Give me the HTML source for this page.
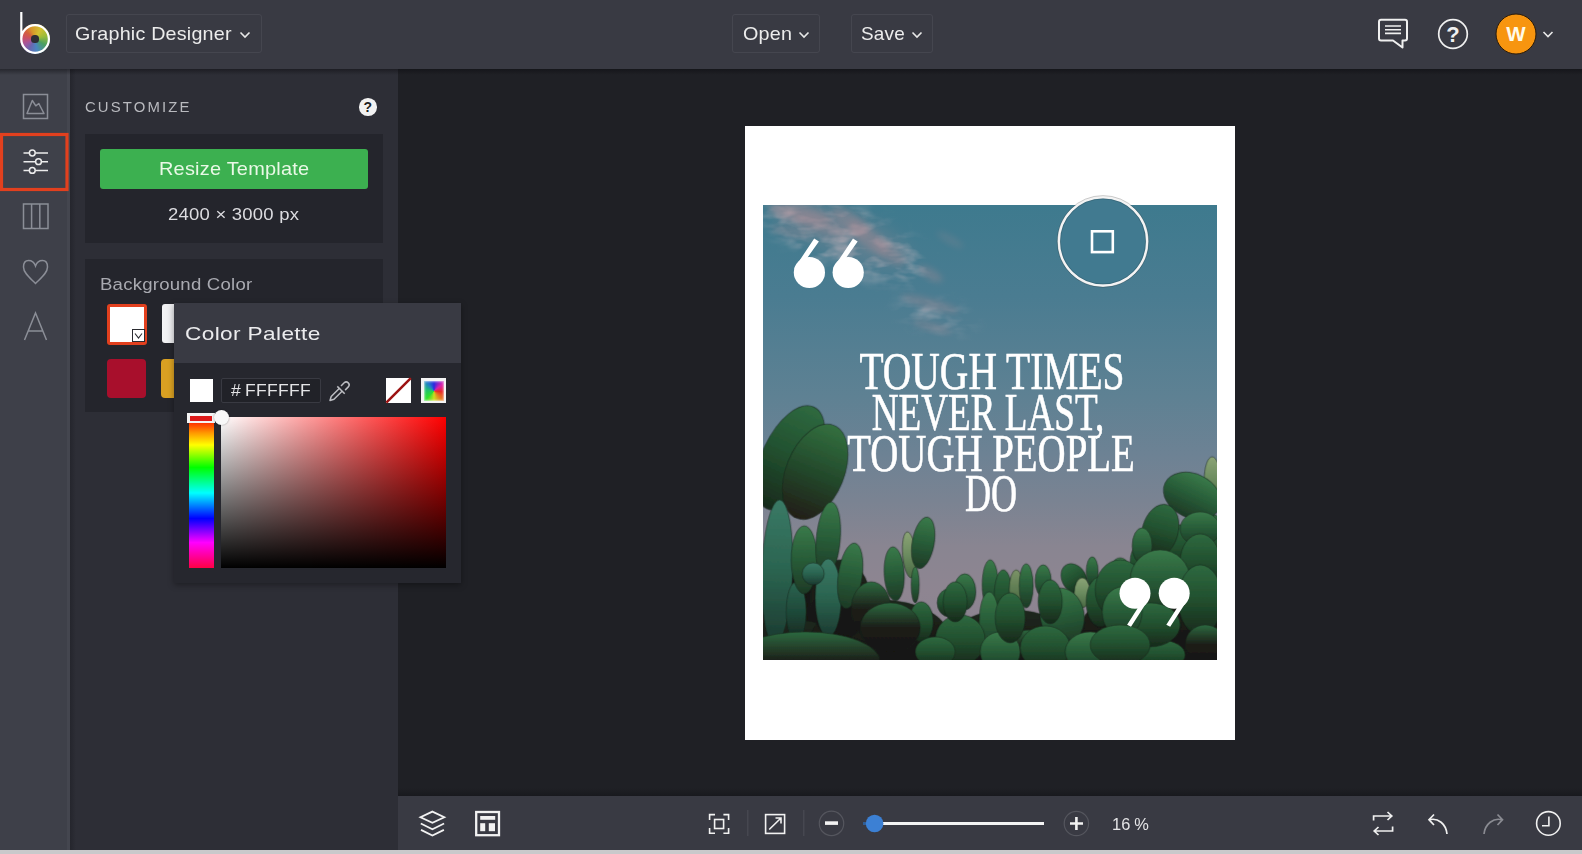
<!DOCTYPE html>
<html><head><meta charset="utf-8">
<style>
*{margin:0;padding:0;box-sizing:border-box}
html,body{width:1582px;height:854px;overflow:hidden;background:#c9c9cb;font-family:"Liberation Sans",sans-serif}
.abs{position:absolute}
#top{left:0;top:0;width:1582px;height:69px;background:#393a43}
#side{left:0;top:69px;width:70px;height:781px;background:#3e4049}
#panel{left:70px;top:69px;width:328px;height:781px;background:#2d2e36}
#canvas{left:398px;top:69px;width:1184px;height:727px;background:#1f2025}
#bottom{left:398px;top:796px;width:1184px;height:54px;background:#393a43}
.ddbox{border:1px solid #45464f;border-radius:3px}
.txt{color:#ececec;white-space:nowrap;line-height:1}
svg{position:absolute;overflow:visible}
</style></head>
<body>
<div id="top" class="abs"></div>
<div id="side" class="abs"></div>
<div id="panel" class="abs"></div>
<div id="canvas" class="abs"></div>
<div class="abs" style="left:398px;top:788px;width:1184px;height:8px;background:linear-gradient(rgba(8,8,12,0),rgba(8,8,12,.3))"></div>
<div id="bottom" class="abs"></div>

<!-- ============ TOP BAR ============ -->
<!-- logo -->
<div class="abs" style="left:20px;top:24px;width:30px;height:30px;border-radius:50%;background:conic-gradient(from -20deg,#d8962a,#d2c030 50deg,#98bc3a 95deg,#4aa060 140deg,#4a86c0 190deg,#6a66b0 230deg,#a8559a 265deg,#cc5060 300deg,#d4603c 330deg,#d8962a 360deg)"></div>
<div class="abs" style="left:31.4px;top:35.4px;width:7.2px;height:7.2px;border-radius:50%;background:#2e2f36"></div>
<svg style="left:0;top:0" width="70" height="69"><path d="M21.3 12 V39 A13.8 13.8 0 1 0 35 25.2 A13.8 13.8 0 0 0 21.3 39" fill="none" stroke="#fff" stroke-width="2.2"/></svg>

<div class="abs ddbox" style="left:66px;top:14px;width:196px;height:39px"></div>
<div class="abs txt" id="t-gd" style="left:75.43px;top:24.5px;font-size:18.5px;letter-spacing:0.2px;color:#ececec;transform-origin:0 0;transform:scaleX(1.0651)">Graphic Designer</div>
<svg style="left:0;top:0" width="300" height="69"><path d="M240.5 32.5 L245 37 L249.5 32.5" fill="none" stroke="#e8e8e8" stroke-width="1.6"/></svg>

<div class="abs ddbox" style="left:732px;top:14px;width:88px;height:39px"></div>
<div class="abs txt" id="t-open" style="left:742.63px;top:24.9px;font-size:18.5px;letter-spacing:0.2px;color:#ececec;transform-origin:0 0;transform:scaleX(1.0682)">Open</div>
<div class="abs ddbox" style="left:851px;top:14px;width:82px;height:39px"></div>
<div class="abs txt" id="t-save" style="left:860.68px;top:24.9px;font-size:18.5px;letter-spacing:0.2px;color:#ececec;transform-origin:0 0;transform:scaleX(1.022)">Save</div>
<svg style="left:0;top:0" width="1582" height="69">
  <path d="M799.5 32.5 L804 37 L808.5 32.5" fill="none" stroke="#e8e8e8" stroke-width="1.6"/>
  <path d="M912.5 32.5 L917 37 L921.5 32.5" fill="none" stroke="#e8e8e8" stroke-width="1.6"/>
  <!-- chat -->
  <path d="M1381 19.8 H1405 A2 2 0 0 1 1407 21.8 V38.5 A2 2 0 0 1 1405 40.5 H1402.5 V47.5 L1393 40.5 H1381 A2 2 0 0 1 1379 38.5 V21.8 A2 2 0 0 1 1381 19.8 Z" fill="none" stroke="#f0f0f0" stroke-width="2" stroke-linejoin="round"/>
  <path d="M1385 26 H1401 M1385 29.7 H1401 M1385 33.4 H1401" stroke="#f0f0f0" stroke-width="1.6"/>
  <!-- help -->
  <circle cx="1453" cy="34" r="14.3" fill="none" stroke="#f0f0f0" stroke-width="1.7"/>
  <!-- avatar -->
  <circle cx="1516" cy="34" r="20" fill="#f7950f" stroke="#2a1a08" stroke-width="1"/>
  <path d="M1543.5 32 L1548 36.5 L1552.5 32" fill="none" stroke="#e8e8e8" stroke-width="1.6"/>
</svg>
<div class="abs txt" style="left:1442px;top:24px;font-size:22px;font-weight:bold;color:#f0f0f0;width:22px;text-align:center">?</div>
<div class="abs txt" style="left:1503px;top:24px;font-size:20.5px;font-weight:bold;color:#fffbe8;width:26px;text-align:center">W</div>

<!-- ============ SIDEBAR ============ -->
<div class="abs" style="left:67px;top:69px;width:3px;height:781px;background:#44464f"></div>
<div class="abs" style="left:70px;top:69px;width:6px;height:781px;background:linear-gradient(90deg,#25262d,#2d2e36)"></div>
<svg style="left:0;top:0" width="70" height="850">
  <g fill="none" stroke="#8b8e97" stroke-width="1.5">
    <rect x="23.5" y="94.5" width="24" height="24"/>
    <path d="M27 113.5 L32.3 100.5 L35.8 105.8 L38.8 103.5 L44 113.5 Z" stroke-linejoin="round"/>
    <rect x="23.5" y="204" width="24.5" height="24.5"/>
    <path d="M31.6 204 V228.5 M39.8 204 V228.5"/>
    <path d="M35.5 266 C33 259 23.5 258 23.5 267 C23.5 273 30 278 35.5 283.5 C41 278 47.5 273 47.5 267 C47.5 258 38 259 35.5 266 Z"/>
    <path d="M24.5 340 L35.5 313 L46.5 340 M28.3 331 H42.7"/>
  </g>
  <rect x="1.5" y="134.5" width="65.5" height="55" fill="#3f414a" stroke="#e2401e" stroke-width="3.2"/>
  <g stroke="#ececec" stroke-width="1.5" fill="none">
    <path d="M23.5 153 H29.3 M35.3 153 H48 M23.5 161.7 H35.5 M41.5 161.7 H48 M23.5 170.4 H29.3 M35.3 170.4 H48"/>
    <circle cx="32.3" cy="153" r="2.9"/>
    <circle cx="38.5" cy="161.7" r="2.9"/>
    <circle cx="32.3" cy="170.4" r="2.9"/>
  </g>
</svg>

<div class="abs" style="left:0;top:69px;width:1582px;height:6px;background:linear-gradient(rgba(10,10,14,.45),rgba(10,10,14,0))"></div>
<!-- ============ PANEL ============ -->
<div class="abs txt" id="t-cust" style="left:84.54px;top:99.9px;font-size:14px;letter-spacing:2.0px;color:#b9babf;transform-origin:0 0;transform:scaleX(1.0629)">CUSTOMIZE</div>
<div class="abs" style="left:359px;top:98px;width:17.5px;height:17.5px;border-radius:50%;background:#f2f2f2"></div>
<div class="abs txt" style="left:359px;top:100px;width:17.5px;text-align:center;font-size:14px;font-weight:bold;color:#1e1f24">?</div>

<div class="abs" style="left:85px;top:134px;width:298px;height:109px;background:#24252c"></div>
<div class="abs" style="left:100px;top:149px;width:268px;height:40px;background:#3cb050;border-radius:3px"></div>
<div class="abs txt" id="t-resize" style="left:158.62px;top:159.6px;font-size:18.5px;letter-spacing:0.2px;color:#e9f8e6;transform-origin:0 0;transform:scaleX(1.0783)">Resize Template</div>
<div class="abs txt" id="t-dim" style="left:168.04px;top:207.2px;font-size:16px;letter-spacing:0.2px;color:#dcdce0;transform-origin:0 0;transform:scaleX(1.1554)">2400 × 3000 px</div>

<div class="abs" style="left:85px;top:259px;width:298px;height:153px;background:#24252c"></div>
<div class="abs txt" id="t-bg" style="left:99.59px;top:276.9px;font-size:16.7px;letter-spacing:0.2px;color:#a9aab1;transform-origin:0 0;transform:scaleX(1.114)">Background Color</div>
<div class="abs" style="left:107px;top:304px;width:40px;height:41px;border:3px solid #e2401e;border-radius:3px;background:#fff"></div>
<div class="abs" style="left:132px;top:329px;width:13px;height:13px;border:1px solid #2a2b30;background:#fff"></div>
<svg style="left:0;top:0" width="200" height="400"><path d="M135 333.5 L138.5 338 L142 333.5" fill="none" stroke="#2a2b30" stroke-width="1.1"/></svg>
<div class="abs" style="left:162px;top:304px;width:30px;height:39px;border-radius:3px;background:linear-gradient(90deg,#f4f4f6,#d8d8dc)"></div>
<div class="abs" style="left:107px;top:359px;width:39px;height:39px;border-radius:4px;background:#a80f2c"></div>
<div class="abs" style="left:161px;top:359px;width:30px;height:39px;border-radius:4px;background:#d9a022"></div>

<!-- ============ POPUP ============ -->
<div class="abs" style="left:174px;top:303px;width:287px;height:280px;background:#26272e;box-shadow:0 2px 6px rgba(0,0,0,.35)"></div>
<div class="abs" style="left:174px;top:303px;width:287px;height:60px;background:#393a43"></div>
<div class="abs txt" id="t-cp" style="left:185.46px;top:325.2px;font-size:18.2px;letter-spacing:0.3px;color:#ebebed;transform-origin:0 0;transform:scaleX(1.2439)">Color Palette</div>
<div class="abs" style="left:190px;top:379px;width:23px;height:23px;background:#fff"></div>
<div class="abs" style="left:221px;top:378px;width:100px;height:25px;border:1px solid #393a42;background:#212228;border-radius:2px"></div>
<div class="abs txt" id="t-hex" style="left:231.0px;top:382.1px;font-size:16.5px;letter-spacing:0.3px;color:#e4e4e6;transform-origin:0 0;transform:scaleX(1.0627)">#&thinsp;FFFFFF</div>
<svg style="left:0;top:0" width="470" height="600">
  <g fill="none" stroke="#bcbdc2" stroke-width="1.5" stroke-linejoin="round">
    <path d="M339.5 388.2 L331.2 396.5 L330 400.5 L334 399.3 L342.3 391"/>
    <path d="M337.3 386.4 L344.7 393.8"/>
    <path d="M341 386 L344.2 382.8 A2.9 2.9 0 0 1 348.3 386.9 L345.1 390.1"/>
  </g>
  <rect x="386" y="378" width="25" height="25" fill="#fff"/>
  <path d="M386.3 402.6 L410.8 378.1" stroke="#9c1212" stroke-width="2.5"/>
  <rect x="421" y="378" width="25" height="25" fill="#f4f4f4"/>
</svg>
<div class="abs" style="left:423.5px;top:380.5px;width:20px;height:20px;background:conic-gradient(from 0deg,#2a2ae0,#d820b0 50deg,#e82828 95deg,#e88020 140deg,#c8e020 180deg,#30e030 225deg,#20c070 280deg,#2080c8 320deg,#2a2ae0)"></div>
<div class="abs" style="left:423.5px;top:380.5px;width:20px;height:20px;box-shadow:inset 0 0 2px 1px rgba(255,255,255,.6)"></div>
<!-- hue bar -->
<div class="abs" style="left:189px;top:418px;width:25px;height:150px;background:linear-gradient(#ff0000,#ff9900 10%,#ffff00 18%,#00ff00 33%,#00ffff 50%,#0000ff 67%,#ff00ff 83%,#ff0044 100%)"></div>
<div class="abs" style="left:187px;top:413px;width:28px;height:10px;background:#f4f4f4"></div>
<div class="abs" style="left:190px;top:415.5px;width:22px;height:5px;background:#dd1a1a"></div>
<!-- SV area -->
<div class="abs" style="left:221px;top:417px;width:225px;height:151px;background:linear-gradient(to top,#000,rgba(0,0,0,0)),linear-gradient(to right,#fff,#ff0000)"></div>
<div class="abs" style="left:213.5px;top:410px;width:15px;height:15px;border-radius:50%;background:#f8f8f8;box-shadow:0 0 2px rgba(0,0,0,.4)"></div>

<!-- ============ BOTTOM TOOLBAR ============ -->
<svg style="left:0;top:0" width="1582" height="854">
  <g fill="none" stroke="#f2f2f2" stroke-width="2" stroke-linejoin="miter">
    <path d="M432.4 811.6 L444.3 817.2 L432.4 822.8 L420.5 817.2 Z" stroke-width="1.8"/>
    <path d="M420.8 823.5 L432.4 829.2 L444.1 823.5" stroke-width="1.8"/>
    <path d="M421 829.9 L432.4 835.6 L443.9 829.9" stroke-width="1.8"/>
    <rect x="476.2" y="812" width="22.8" height="23.2" stroke-width="2.3"/>
  </g>
  <g fill="#f2f2f2">
    <rect x="480.2" y="816" width="15" height="3.8"/>
    <rect x="480.2" y="823.2" width="5" height="8"/>
    <rect x="488.8" y="823.2" width="6.2" height="8"/>
  </g>
  <g fill="none" stroke="#f2f2f2" stroke-width="1.6">
    <path d="M709.6 820 V814.6 H715 M723.4 814.6 H728.6 V820 M728.6 828 V833.2 H723.4 M715 833.2 H709.6 V828"/>
    <rect x="714.6" y="819.5" width="9" height="9"/>
    <rect x="765.6" y="814.6" width="19" height="18.8"/>
    <path d="M769.2 829.5 L781 818 M775.5 818 H781 V823.5"/>
  </g>
  <path d="M747.8 810 V836 M803.8 810 V836" stroke="#4a4b54" stroke-width="1.2"/>
  <circle cx="831.5" cy="823.4" r="12.2" fill="none" stroke="#55565e" stroke-width="1.2"/>
  <rect x="825" y="821.3" width="13" height="3.6" fill="#f2f2f2"/>
  <rect x="875" y="822" width="169" height="3" fill="#f4f4f4"/><rect x="863" y="822" width="12" height="3" fill="#2f5d96"/>
  <circle cx="874.6" cy="823.5" r="8.8" fill="#3c80d4"/>
  <circle cx="1076.4" cy="823.5" r="12.2" fill="none" stroke="#55565e" stroke-width="1.2"/>
  <path d="M1070 823.5 H1083 M1076.4 817 V830" stroke="#f2f2f2" stroke-width="2.6"/>
  <g fill="none" stroke="#f0f0f0" stroke-width="1.7">
    <path d="M1373.6 820.5 V816 H1391.5 M1387.5 812 L1391.8 816 L1387.5 820"/>
    <path d="M1392.6 826.5 V831 H1374.5 M1378.5 827 L1374.2 831 L1378.5 835"/>
    <path d="M1429.5 819.7 C1438 817.5 1446 824 1447 834 M1434 814.5 L1429 819.7 L1434 825"/>
    <circle cx="1548.4" cy="823.4" r="11.8" stroke-width="1.6"/>
    <path d="M1548.9 816.5 V825.7 H1542" stroke-width="1.6"/>
  </g>
  <g fill="none" stroke="#8a8b92" stroke-width="1.7">
    <path d="M1501.8 819.7 C1493.5 817.5 1485 824 1484 834 M1497.5 814.5 L1502.5 819.7 L1497.5 825"/>
  </g>
</svg>
<div class="abs txt" id="t-zoom" style="left:1111.71px;top:816px;font-size:16.5px;letter-spacing:0.2px;color:#e4e4e6;transform-origin:0 0;transform:scaleX(0.9944)">16&thinsp;%</div>

<!-- ============ DOCUMENT ============ -->
<div class="abs" style="left:745px;top:126px;width:490px;height:613.5px;background:#fff"></div>
<svg class="abs" style="left:762.8px;top:205.2px;overflow:hidden" width="454.4" height="454.8" viewBox="762.8 205.2 454.4 454.8">
<defs>
<linearGradient id="sky" x1="0" y1="0" x2="0" y2="1"><stop offset="0" stop-color="#3e7a8e"/><stop offset="0.2" stop-color="#4a7c91"/><stop offset="0.42" stop-color="#5e8193"/><stop offset="0.55" stop-color="#6d8294"/><stop offset="0.65" stop-color="#7a8392"/><stop offset="0.75" stop-color="#898591"/><stop offset="0.85" stop-color="#8e8591"/><stop offset="1" stop-color="#8a8290"/></linearGradient>
<linearGradient id="g_mid" x1="0" y1="0" x2="0" y2="1"><stop offset="0" stop-color="#3a7a4a"/><stop offset="0.5" stop-color="#285c38"/><stop offset="1" stop-color="#1e3a26"/></linearGradient>
<linearGradient id="g_mid2" x1="0" y1="0" x2="0" y2="1"><stop offset="0" stop-color="#2f6a40"/><stop offset="0.5" stop-color="#22502f"/><stop offset="1" stop-color="#182a1c"/></linearGradient>
<linearGradient id="g_midsh" x1="0" y1="0" x2="0" y2="1"><stop offset="0" stop-color="#33703f"/><stop offset="0.5" stop-color="#244a2c"/><stop offset="1" stop-color="#231e18"/></linearGradient>
<linearGradient id="g_teal" x1="0" y1="0" x2="0" y2="1"><stop offset="0" stop-color="#3a7a66"/><stop offset="0.5" stop-color="#2b6450"/><stop offset="1" stop-color="#1c3a30"/></linearGradient>
<linearGradient id="g_teal2" x1="0" y1="0" x2="0" y2="1"><stop offset="0" stop-color="#2b6450"/><stop offset="0.5" stop-color="#1f4a3a"/><stop offset="1" stop-color="#16261f"/></linearGradient>
<linearGradient id="g_light" x1="0" y1="0" x2="0" y2="1"><stop offset="0" stop-color="#8ca476"/><stop offset="0.5" stop-color="#6c8c60"/><stop offset="1" stop-color="#4a6a44"/></linearGradient>
<linearGradient id="g_light2" x1="0" y1="0" x2="0" y2="1"><stop offset="0" stop-color="#7c9468"/><stop offset="0.5" stop-color="#5e7c52"/><stop offset="1" stop-color="#3e5a36"/></linearGradient>
<linearGradient id="g_dark" x1="0" y1="0" x2="0" y2="1"><stop offset="0" stop-color="#1f2a1f"/><stop offset="0.5" stop-color="#1a1a16"/><stop offset="1" stop-color="#161512"/></linearGradient>
<linearGradient id="g_darkrim" x1="0" y1="0" x2="0" y2="1"><stop offset="0" stop-color="#2e6a40"/><stop offset="0.5" stop-color="#1c1d18"/><stop offset="1" stop-color="#171512"/></linearGradient>
<filter id="blur8" x="-50%" y="-50%" width="200%" height="200%"><feGaussianBlur stdDeviation="8"/></filter>
<filter id="blur3" x="-50%" y="-50%" width="200%" height="200%"><feGaussianBlur stdDeviation="3"/></filter>
<filter id="blur4" x="-50%" y="-50%" width="200%" height="200%"><feGaussianBlur stdDeviation="4"/></filter>
<filter id="blur1" x="-20%" y="-20%" width="140%" height="140%"><feGaussianBlur stdDeviation="0.5"/></filter>
<filter id="tex" x="0" y="0" width="100%" height="100%"><feTurbulence type="fractalNoise" baseFrequency="0.18 0.12" numOctaves="2" seed="7" result="n"/><feColorMatrix in="n" type="matrix" values="0 0 0 0 0.45  0 0 0 0 0.62  0 0 0 0 0.42  0 0 0 2.2 -1.05" result="spots"/><feComposite in="spots" in2="SourceGraphic" operator="in" result="sp"/><feComponentTransfer in="sp" result="sp2"><feFuncA type="linear" slope="0.45"/></feComponentTransfer><feMerge><feMergeNode in="SourceGraphic"/><feMergeNode in="sp2"/></feMerge></filter>
<filter id="cloudf" x="762" y="205" width="262" height="152" filterUnits="userSpaceOnUse"><feTurbulence type="fractalNoise" baseFrequency="0.035 0.08" numOctaves="3" seed="11"/><feColorMatrix type="matrix" values="0 0 0 0 0.63  0 0 0 0 0.53  0 0 0 0 0.57  0 0 0 2.3 -1.0"/></filter>
<mask id="cloudm" maskUnits="userSpaceOnUse" x="700" y="150" width="400" height="300"><g filter="url(#blur8)"><ellipse cx="845" cy="238" rx="90" ry="30" transform="rotate(22 845 238)" fill="#fff"/><ellipse cx="935" cy="315" rx="40" ry="14" transform="rotate(15 935 315)" fill="#999"/></g></mask>
</defs>
<rect x="762.8" y="205.2" width="454.4" height="454.8" fill="url(#sky)"/>
<rect x="762.8" y="205.2" width="260" height="150" filter="url(#cloudf)" mask="url(#cloudm)" opacity=".75"/>
<ellipse cx="840" cy="232" rx="75" ry="22" transform="rotate(22 840 232)" fill="#9c8a94" opacity=".28" filter="url(#blur8)"/>
<ellipse cx="800" cy="214" rx="32" ry="9" transform="rotate(12 800 214)" fill="#a48a94" opacity="0.45" filter="url(#blur3)"/>
<ellipse cx="820" cy="225" rx="28" ry="8" transform="rotate(20 820 225)" fill="#a48a94" opacity="0.35" filter="url(#blur3)"/>
<ellipse cx="850" cy="222" rx="22" ry="9" transform="rotate(35 850 222)" fill="#a48a94" opacity="0.4" filter="url(#blur3)"/>
<ellipse cx="868" cy="238" rx="25" ry="9" transform="rotate(40 868 238)" fill="#a48a94" opacity="0.4" filter="url(#blur3)"/>
<ellipse cx="888" cy="252" rx="20" ry="7" transform="rotate(40 888 252)" fill="#a48a94" opacity="0.35" filter="url(#blur3)"/>
<ellipse cx="930" cy="274" rx="14" ry="5" transform="rotate(30 930 274)" fill="#a48a94" opacity="0.35" filter="url(#blur3)"/>
<ellipse cx="930" cy="304" rx="30" ry="5" transform="rotate(15 930 304)" fill="#a48a94" opacity="0.35" filter="url(#blur3)"/>
<ellipse cx="932" cy="327" rx="20" ry="4" transform="rotate(15 932 327)" fill="#a48a94" opacity="0.3" filter="url(#blur3)"/>
<ellipse cx="790" cy="232" rx="20" ry="5" transform="rotate(10 790 232)" fill="#a48a94" opacity="0.25" filter="url(#blur3)"/>
<ellipse cx="950" cy="240" rx="15" ry="4" transform="rotate(30 950 240)" fill="#a48a94" opacity="0.2" filter="url(#blur3)"/>
<g filter="url(#blur1)">
<path d="M762.8 660 L762.8 560 L790 560 L830 590 L860 625 L1217.2 625 L1217.2 660 Z" fill="#171612"/>
<ellipse cx="790" cy="650" rx="60" ry="30" transform="rotate(0 790 650)" fill="url(#g_dark)" stroke="#142019" stroke-opacity=".55" stroke-width="0.9"/>
<ellipse cx="880" cy="640" rx="70" ry="40" transform="rotate(0 880 640)" fill="url(#g_dark)" stroke="#142019" stroke-opacity=".55" stroke-width="0.9"/>
<ellipse cx="1010" cy="640" rx="60" ry="30" transform="rotate(0 1010 640)" fill="url(#g_dark)" stroke="#142019" stroke-opacity=".55" stroke-width="0.9"/>
<ellipse cx="1150" cy="630" rx="70" ry="40" transform="rotate(0 1150 630)" fill="url(#g_dark)" stroke="#142019" stroke-opacity=".55" stroke-width="0.9"/>
<ellipse cx="840" cy="600" rx="30" ry="40" transform="rotate(0 840 600)" fill="url(#g_dark)" stroke="#142019" stroke-opacity=".55" stroke-width="0.9"/>
<ellipse cx="790" cy="458" rx="28" ry="56" transform="rotate(25 790 458)" fill="url(#g_mid2)" stroke="#142019" stroke-opacity=".55" stroke-width="0.9"/>
<ellipse cx="815" cy="472" rx="29" ry="50" transform="rotate(22 815 472)" fill="url(#g_midsh)" stroke="#142019" stroke-opacity=".55" stroke-width="0.9"/>
<ellipse cx="777" cy="572" rx="15.5" ry="72" transform="rotate(2 777 572)" fill="url(#g_teal)" stroke="#142019" stroke-opacity=".55" stroke-width="0.9"/>
<ellipse cx="796" cy="612" rx="10" ry="30" transform="rotate(0 796 612)" fill="url(#g_teal2)" stroke="#142019" stroke-opacity=".55" stroke-width="0.9"/>
<ellipse cx="804" cy="560" rx="13" ry="34" transform="rotate(0 804 560)" fill="url(#g_mid)" stroke="#142019" stroke-opacity=".55" stroke-width="0.9"/>
<ellipse cx="828" cy="540" rx="12" ry="38" transform="rotate(5 828 540)" fill="url(#g_mid)" stroke="#142019" stroke-opacity=".55" stroke-width="0.9"/>
<ellipse cx="828" cy="598" rx="13" ry="39" transform="rotate(0 828 598)" fill="url(#g_teal)" stroke="#142019" stroke-opacity=".55" stroke-width="0.9"/>
<ellipse cx="813" cy="574" rx="11" ry="11" transform="rotate(0 813 574)" fill="url(#g_teal)" stroke="#142019" stroke-opacity=".55" stroke-width="0.9"/>
<ellipse cx="850" cy="576" rx="12" ry="33" transform="rotate(8 850 576)" fill="url(#g_mid)" stroke="#142019" stroke-opacity=".55" stroke-width="0.9"/>
<ellipse cx="871" cy="610" rx="20" ry="28" transform="rotate(0 871 610)" fill="url(#g_darkrim)" stroke="#142019" stroke-opacity=".55" stroke-width="0.9"/>
<ellipse cx="894" cy="574" rx="10" ry="27" transform="rotate(-3 894 574)" fill="url(#g_mid)" stroke="#142019" stroke-opacity=".55" stroke-width="0.9"/>
<ellipse cx="909" cy="555" rx="6.5" ry="23" transform="rotate(-5 909 555)" fill="url(#g_light)" stroke="#142019" stroke-opacity=".55" stroke-width="0.9"/>
<ellipse cx="923" cy="543" rx="11" ry="26" transform="rotate(10 923 543)" fill="url(#g_mid)" stroke="#142019" stroke-opacity=".55" stroke-width="0.9"/>
<ellipse cx="915" cy="585" rx="4" ry="18" transform="rotate(0 915 585)" fill="url(#g_mid)" stroke="#142019" stroke-opacity=".55" stroke-width="0.9"/>
<ellipse cx="921" cy="622" rx="12" ry="20" transform="rotate(0 921 622)" fill="url(#g_mid2)" stroke="#142019" stroke-opacity=".55" stroke-width="0.9"/>
<ellipse cx="964.6" cy="592" rx="11" ry="18" transform="rotate(0 964.6 592)" fill="url(#g_mid)" stroke="#142019" stroke-opacity=".55" stroke-width="0.9"/>
<ellipse cx="949" cy="603" rx="12" ry="14" transform="rotate(0 949 603)" fill="url(#g_mid2)" stroke="#142019" stroke-opacity=".55" stroke-width="0.9"/>
<ellipse cx="890" cy="628" rx="30" ry="25" transform="rotate(0 890 628)" fill="url(#g_darkrim)" stroke="#142019" stroke-opacity=".55" stroke-width="0.9"/>
<ellipse cx="805" cy="662" rx="75" ry="30" transform="rotate(0 805 662)" fill="url(#g_darkrim)" stroke="#142019" stroke-opacity=".55" stroke-width="0.9"/>
<ellipse cx="990" cy="585" rx="8" ry="25" transform="rotate(0 990 585)" fill="url(#g_mid)" stroke="#142019" stroke-opacity=".55" stroke-width="0.9"/>
<ellipse cx="1003" cy="596" rx="9" ry="26" transform="rotate(0 1003 596)" fill="url(#g_mid2)" stroke="#142019" stroke-opacity=".55" stroke-width="0.9"/>
<ellipse cx="1016" cy="590" rx="7" ry="20" transform="rotate(0 1016 590)" fill="url(#g_light2)" stroke="#142019" stroke-opacity=".55" stroke-width="0.9"/>
<ellipse cx="1026" cy="586" rx="7" ry="22" transform="rotate(0 1026 586)" fill="url(#g_mid)" stroke="#142019" stroke-opacity=".55" stroke-width="0.9"/>
<ellipse cx="1043" cy="581" rx="8" ry="16" transform="rotate(0 1043 581)" fill="url(#g_mid)" stroke="#142019" stroke-opacity=".55" stroke-width="0.9"/>
<ellipse cx="1074" cy="579" rx="12" ry="16" transform="rotate(-30 1074 579)" fill="url(#g_mid2)" stroke="#142019" stroke-opacity=".55" stroke-width="0.9"/>
<ellipse cx="1082" cy="593" rx="8" ry="15" transform="rotate(0 1082 593)" fill="url(#g_light)" stroke="#142019" stroke-opacity=".55" stroke-width="0.9"/>
<ellipse cx="1092" cy="572" rx="6" ry="15" transform="rotate(0 1092 572)" fill="url(#g_mid)" stroke="#142019" stroke-opacity=".55" stroke-width="0.9"/>
<ellipse cx="989" cy="622" rx="10" ry="30" transform="rotate(0 989 622)" fill="url(#g_mid)" stroke="#142019" stroke-opacity=".55" stroke-width="0.9"/>
<ellipse cx="1062" cy="616" rx="22" ry="28" transform="rotate(-10 1062 616)" fill="url(#g_mid)" stroke="#142019" stroke-opacity=".55" stroke-width="0.9"/>
<ellipse cx="1034" cy="648" rx="40" ry="18" transform="rotate(0 1034 648)" fill="url(#g_darkrim)" stroke="#142019" stroke-opacity=".55" stroke-width="0.9"/>
<ellipse cx="960" cy="640" rx="25" ry="25" transform="rotate(0 960 640)" fill="url(#g_mid2)" stroke="#142019" stroke-opacity=".55" stroke-width="0.9"/>
<ellipse cx="1000" cy="652" rx="20" ry="20" transform="rotate(0 1000 652)" fill="url(#g_mid)" stroke="#142019" stroke-opacity=".55" stroke-width="0.9"/>
<ellipse cx="1045" cy="648" rx="25" ry="22" transform="rotate(0 1045 648)" fill="url(#g_mid2)" stroke="#142019" stroke-opacity=".55" stroke-width="0.9"/>
<ellipse cx="1090" cy="652" rx="25" ry="20" transform="rotate(0 1090 652)" fill="url(#g_mid)" stroke="#142019" stroke-opacity=".55" stroke-width="0.9"/>
<ellipse cx="935" cy="652" rx="20" ry="15" transform="rotate(0 935 652)" fill="url(#g_mid2)" stroke="#142019" stroke-opacity=".55" stroke-width="0.9"/>
<ellipse cx="1160" cy="655" rx="25" ry="15" transform="rotate(0 1160 655)" fill="url(#g_mid2)" stroke="#142019" stroke-opacity=".55" stroke-width="0.9"/>
<ellipse cx="955" cy="602" rx="12" ry="20" transform="rotate(0 955 602)" fill="url(#g_mid2)" stroke="#142019" stroke-opacity=".55" stroke-width="0.9"/>
<ellipse cx="1010" cy="618" rx="15" ry="25" transform="rotate(0 1010 618)" fill="url(#g_mid2)" stroke="#142019" stroke-opacity=".55" stroke-width="0.9"/>
<ellipse cx="1050" cy="602" rx="12" ry="22" transform="rotate(0 1050 602)" fill="url(#g_mid2)" stroke="#142019" stroke-opacity=".55" stroke-width="0.9"/>
<ellipse cx="1100" cy="602" rx="14" ry="25" transform="rotate(0 1100 602)" fill="url(#g_mid2)" stroke="#142019" stroke-opacity=".55" stroke-width="0.9"/>
<ellipse cx="1120" cy="578" rx="12" ry="20" transform="rotate(0 1120 578)" fill="url(#g_mid)" stroke="#142019" stroke-opacity=".55" stroke-width="0.9"/>
<ellipse cx="1150" cy="562" rx="20" ry="25" transform="rotate(0 1150 562)" fill="url(#g_mid2)" stroke="#142019" stroke-opacity=".55" stroke-width="0.9"/>
<ellipse cx="1180" cy="547" rx="18" ry="22" transform="rotate(0 1180 547)" fill="url(#g_mid2)" stroke="#142019" stroke-opacity=".55" stroke-width="0.9"/>
<ellipse cx="1214" cy="545" rx="10" ry="30" transform="rotate(0 1214 545)" fill="url(#g_mid2)" stroke="#142019" stroke-opacity=".55" stroke-width="0.9"/>
<ellipse cx="1212" cy="480" rx="8" ry="23" transform="rotate(0 1212 480)" fill="url(#g_light)" stroke="#142019" stroke-opacity=".55" stroke-width="0.9"/>
<ellipse cx="1192" cy="496" rx="30" ry="22" transform="rotate(25 1192 496)" fill="url(#g_mid)" stroke="#142019" stroke-opacity=".55" stroke-width="0.9"/>
<ellipse cx="1160" cy="531" rx="18" ry="27" transform="rotate(15 1160 531)" fill="url(#g_mid2)" stroke="#142019" stroke-opacity=".55" stroke-width="0.9"/>
<ellipse cx="1200" cy="529" rx="20" ry="17" transform="rotate(0 1200 529)" fill="url(#g_mid)" stroke="#142019" stroke-opacity=".55" stroke-width="0.9"/>
<ellipse cx="1142" cy="546" rx="10" ry="18" transform="rotate(0 1142 546)" fill="url(#g_mid)" stroke="#142019" stroke-opacity=".55" stroke-width="0.9"/>
<ellipse cx="1200" cy="562" rx="20" ry="28" transform="rotate(0 1200 562)" fill="url(#g_mid2)" stroke="#142019" stroke-opacity=".55" stroke-width="0.9"/>
<ellipse cx="1120" cy="590" rx="25" ry="30" transform="rotate(0 1120 590)" fill="url(#g_mid2)" stroke="#142019" stroke-opacity=".55" stroke-width="0.9"/>
<ellipse cx="1160" cy="580" rx="30" ry="30" transform="rotate(0 1160 580)" fill="url(#g_mid)" stroke="#142019" stroke-opacity=".55" stroke-width="0.9"/>
<ellipse cx="1200" cy="600" rx="22" ry="35" transform="rotate(0 1200 600)" fill="url(#g_mid2)" stroke="#142019" stroke-opacity=".55" stroke-width="0.9"/>
<ellipse cx="1150" cy="625" rx="30" ry="22" transform="rotate(0 1150 625)" fill="url(#g_mid2)" stroke="#142019" stroke-opacity=".55" stroke-width="0.9"/>
<ellipse cx="1122" cy="612" rx="20" ry="25" transform="rotate(0 1122 612)" fill="url(#g_mid)" stroke="#142019" stroke-opacity=".55" stroke-width="0.9"/>
<ellipse cx="1120" cy="645" rx="30" ry="20" transform="rotate(0 1120 645)" fill="url(#g_mid2)" stroke="#142019" stroke-opacity=".55" stroke-width="0.9"/>
<ellipse cx="1205" cy="645" rx="20" ry="20" transform="rotate(0 1205 645)" fill="url(#g_darkrim)" stroke="#142019" stroke-opacity=".55" stroke-width="0.9"/>
</g>
</svg>
<!-- quotes -->
<svg style="left:0;top:0" width="1582" height="854">
  <g fill="#fff">
    <circle cx="809.4" cy="272.5" r="15.6"/>
    <path d="M809.4 272.5 L794.2 268.5 L814.2 238.6 L818.9 241.6 L807.5 257.5 Z"/>
    <circle cx="848.2" cy="272.5" r="15.6"/>
    <path d="M848.2 272.5 L833 268.5 L853 238.6 L857.7 241.6 L846.3 257.5 Z"/>
    <circle cx="1135" cy="593.2" r="15.5"/>
    <path d="M1135 593.2 L1150 597.2 L1131 626.8 L1127.1 624.8 L1137.5 608.6 Z"/>
    <circle cx="1174.2" cy="593.2" r="15.5"/>
    <path d="M1174.2 593.2 L1189.2 597.2 L1170.2 626.8 L1166.3 624.8 L1176.7 608.6 Z"/>
  </g>
  <circle cx="1103" cy="241.4" r="44.2" fill="#417a90" stroke="#f4f4f4" stroke-width="2.6"/>
  <circle cx="1103" cy="241.4" r="45.8" fill="none" stroke="rgba(0,0,0,.25)" stroke-width="0.8"/>
  <rect x="1092" y="231.3" width="20.8" height="20.8" fill="none" stroke="#fff" stroke-width="2.6"/>
  <circle cx="1103" cy="241.4" r="42.6" fill="none" stroke="rgba(0,0,0,.18)" stroke-width="0.8"/>
</svg>
<div class="abs" id="quote" style="left:790px;top:0;width:400px;font-family:'Liberation Serif',serif;color:#fff;text-align:center;font-size:52.5px;line-height:52.5px;-webkit-text-stroke:0.6px #fff">
  <div id="q1" style="position:absolute;left:1.5px;top:345.35px;width:400px;transform:scaleX(0.7524)">TOUGH TIMES</div>
  <div id="q2" style="position:absolute;left:-1.8px;top:385.75px;width:400px;transform:scaleX(0.7076)">NEVER LAST,</div>
  <div id="q3" style="position:absolute;left:0.8px;top:426.55px;width:400px;transform:scaleX(0.740)">TOUGH PEOPLE</div>
  <div id="q4" style="position:absolute;left:1.2px;top:467.15px;width:400px;transform:scaleX(0.6886)">DO</div>
</div>

</body></html>
